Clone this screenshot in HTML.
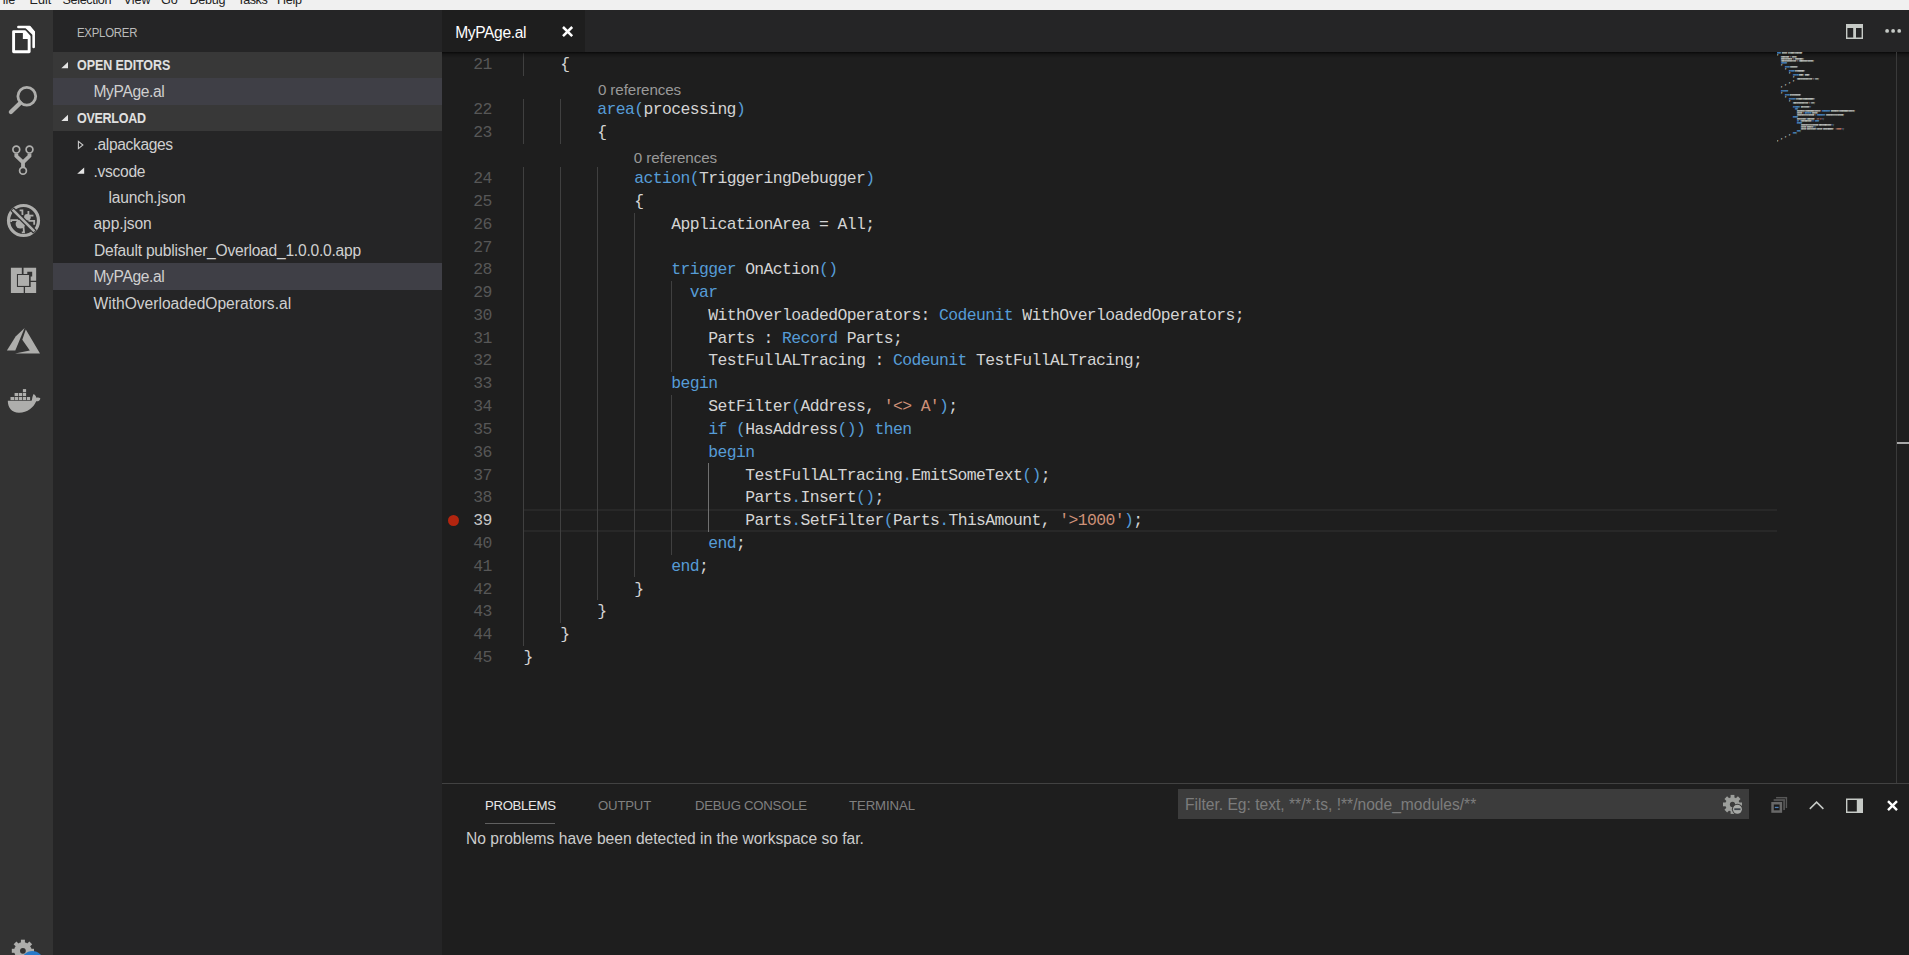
<!DOCTYPE html>
<html><head><meta charset="utf-8"><title>MyPAge.al - Overload - Visual Studio Code</title>
<style>
*{box-sizing:border-box}
html,body{margin:0;padding:0}
body{width:1909px;height:955px;overflow:hidden;background:#1e1e1e;position:relative;font-family:"Liberation Sans",sans-serif;color:#ccc}
.abs{position:absolute}
svg{position:absolute;overflow:visible}
#menubar{left:0;top:0;width:1909px;height:10px;background:#f0f0f0;overflow:hidden}
#menubar span{position:absolute;top:-8.2px;font-size:12.6px;line-height:16px;color:#222;white-space:pre}
#activity{left:0;top:10px;width:53px;height:945px;background:#333333;overflow:hidden}
#sidebar{left:53px;top:10px;width:389px;height:945px;background:#252526}
#tabs{left:442px;top:10px;width:1467px;height:42px;background:#252526}
#tab1{left:0;top:0;width:143px;height:42px;background:#1e1e1e}
.sbtitle{left:24px;top:14px;font-size:13.2px;line-height:18px;color:#bbbbbb;letter-spacing:-.3px;white-space:pre;transform:scaleX(.866);transform-origin:0 0}
.hdr{left:0;width:389px;height:26.4px;background:#383838;font-weight:bold;font-size:14.2px;line-height:26.4px;color:#e0e0e0;white-space:pre}
.hdr span{position:absolute;left:24px;top:0px;letter-spacing:-.1px;transform:scaleX(.881);transform-origin:0 0}
.row{left:0;width:389px;height:26.4px;font-size:15.6px;line-height:26.4px;color:#d0d0d0;white-space:pre}
.row.sel{background:#3f3f46}
.row span{position:absolute;top:.6px}
/* editor */
.cl{position:absolute;left:524px;height:22.8px;line-height:22.8px;font-family:"Liberation Mono",monospace;font-size:16.4px;letter-spacing:-.6px;color:#d4d4d4;white-space:pre}
.num{position:absolute;left:441.2px;width:50.6px;text-align:right;height:22.8px;line-height:22.8px;font-family:"Liberation Mono",monospace;font-size:16.4px;letter-spacing:-.6px;color:#575757;white-space:pre}
.k{color:#569cd6}.s{color:#ce9178}
.lens{position:absolute;height:22.8px;line-height:22.8px;font-size:15.2px;color:#999;white-space:pre;letter-spacing:-.1px}
.g{position:absolute;width:1px;background:#404040}
.ga{position:absolute;width:1px;background:#707070}
/* panel */
#panel{left:442px;top:783px;width:1467px;height:172px;background:#1e1e1e;border-top:1px solid #424242}
.ptab{position:absolute;top:13.1px;font-size:13.2px;line-height:18px;color:#808080;white-space:pre}
#filter{left:736px;top:5px;width:571px;height:30px;background:#3c3c3c}
#filter span{position:absolute;left:7px;top:6.3px;font-size:15.6px;line-height:20px;color:#7c7c7c;white-space:pre}
/* minimap */
#mini{left:1777px;top:52px;width:119px;height:120px;overflow:hidden;z-index:7}
#mini pre{margin:0;position:absolute;left:0;top:-.5px;font-family:"Liberation Mono",monospace;font-weight:bold;font-size:10px;line-height:12px;transform:scale(0.1667);transform-origin:0 0;color:#f0f0f0;text-shadow:0 2.5px 0 currentColor,.8px 0 0 currentColor;opacity:.9}
#mini .k{color:#5fb0f5}#mini .s{color:#f0a080}
</style></head><body>
<div id="menubar" class="abs"><span style="left:-5px">File</span><span style="left:29.5px">Edit</span><span style="left:62.5px;letter-spacing:-.35px">Selection</span><span style="left:123.5px">View</span><span style="left:161px">Go</span><span style="left:189.5px;letter-spacing:-.3px">Debug</span><span style="left:237.5px;letter-spacing:-.5px">Tasks</span><span style="left:277px;letter-spacing:-.3px">Help</span></div>
<div id="activity" class="abs">
<!-- explorer (files) icon, coords are page coords minus (0,10) -->
<svg style="left:0;top:0" width="53" height="945" viewBox="0 10 53 945">
<g fill="none" stroke="#fff" stroke-width="2.6" stroke-linecap="round" stroke-linejoin="round">
<path d="M18.4 27.05 H29.4 L33.65 32 V46.9"/>
</g>
<path d="M25.6 28.3 L29.9 25.8 L34.95 31.8 V34.8 H32.4 Z" fill="#fff"/>
<path d="M13.6 31.6 H24.6 L29.15 36.6 V51.75 H13.6 Z" fill="#333333" stroke="#333333" stroke-width="5.4" stroke-linejoin="round"/>
<path d="M13.6 31.6 H24.6 L29.15 36.6 V51.75 H13.6 Z" fill="none" stroke="#fff" stroke-width="2.9" stroke-linejoin="round"/>
<path d="M22.85 31.6 V38.9 H29.15 V36.6 L24.6 31.6 Z" fill="#fff"/>
<!-- search -->
<g fill="none" stroke="#aeaeac">
<circle cx="26.8" cy="96.2" r="8.9" stroke-width="2.8"/>
<path d="M20.2 103 L10.9 112" stroke-width="4.3" stroke-linecap="round"/>
</g>
<!-- git -->
<g fill="none" stroke="#aeaeac">
<path d="M16.3 153.6 V156 L23 162.4 L29.5 156 V153.6 M23 162 V167" stroke-width="3.8" stroke-linejoin="miter"/>
<circle cx="16.3" cy="149.6" r="3.4" stroke-width="1.7"/>
<circle cx="29.5" cy="149.6" r="3.4" stroke-width="1.7"/>
<circle cx="23" cy="170.8" r="3.4" stroke-width="1.7"/>
</g>
<!-- debug (no bug) -->
<circle cx="23.5" cy="220.5" r="15" stroke="#aeaeac" stroke-width="3.2" fill="none"/>
<g fill="#aeaeac" stroke="none">
<ellipse cx="20.4" cy="224" rx="4.8" ry="4.6"/>
<ellipse cx="27.4" cy="217.2" rx="3.3" ry="3.2"/>
</g>
<g fill="none" stroke="#aeaeac" stroke-width="1.8">
<path d="M11.2 222 V220.2 H18"/>
<path d="M23.4 226 L24 232.4 H21.8"/>
<path d="M19.6 210.4 H22.4 V215"/>
<path d="M28.4 211 V215"/>
<path d="M30 215.6 H33.4"/>
<path d="M28.4 220.8 H34.2 V224.8"/>
</g>
<path d="M12 209 L35 232" stroke="#333333" stroke-width="5.2" fill="none"/>
<path d="M12.6 209.6 L34.4 231.4" stroke="#aeaeac" stroke-width="2.6" fill="none"/>
<!-- extensions -->
<g fill="#aeaeac">
<path d="M10.9 267.84 H21.83 V274.06 H16.93 V286.9 H23.72 V293.1 H10.9 Z"/>
<path d="M23.53 267.84 H36.15 V280.66 H30.69 V276.5 H32.2 V271.8 H27.3 V274.06 H23.53 Z"/>
<path d="M30.69 281.98 H36.15 V293.1 H25.03 V286.9 H30.69 Z"/>
<rect x="17.99" y="275" width="11.08" height="10.9"/>
</g>
<!-- azure -->
<g fill="#aeaeac">
<path d="M24.6 328 L15.6 336.4 L6.9 350.6 H15.3 Z"/>
<path d="M25.8 329.6 L40 353.4 H15 L29.8 350.6 L22.3 339.8 Z"/>
</g>
<!-- docker -->
<g fill="#aeaeac">
<path d="M7.8 400.7 H31.6 C32.4 399.6 32 396.4 33.6 394 C35.2 395 36.2 396.4 36.4 397.8 C37.8 397.2 39.4 397.4 40.4 398.4 C39.9 400.6 38 401.5 36.2 401.2 C33.6 407.4 27.6 412.7 19 412.7 C11.6 412.7 7.8 407.6 7.8 400.7 Z"/>
<rect x="10.5" y="397" width="3.5" height="3.1"/>
<rect x="14.6" y="397" width="3.5" height="3.1"/>
<rect x="18.8" y="397" width="3.4" height="3.1"/>
<rect x="22.9" y="397" width="3.2" height="3.1"/>
<rect x="26.9" y="397" width="3.2" height="3.1"/>
<rect x="14.6" y="393" width="3.5" height="3.1"/>
<rect x="18.8" y="393" width="3.4" height="3.1"/>
<rect x="22.9" y="393" width="3.2" height="3.1"/>
<rect x="22.9" y="389.1" width="3.2" height="3.1"/>
</g>
<!-- gear -->
<g transform="translate(22.9 950.8)" fill="#aeaeac">
<circle r="8.7"/>
<g id="gt"><rect x="-2" y="-11.1" width="4" height="6"/><rect x="-2" y="5.1" width="4" height="6"/><rect x="-11.1" y="-2" width="6" height="4"/><rect x="5.1" y="-2" width="6" height="4"/></g>
<g transform="rotate(45)"><rect x="-2" y="-11.1" width="4" height="6"/><rect x="-2" y="5.1" width="4" height="6"/><rect x="-11.1" y="-2" width="6" height="4"/><rect x="5.1" y="-2" width="6" height="4"/></g>
<circle r="2.9" fill="#333333"/>
</g>
<circle cx="32.4" cy="961.7" r="10.8" fill="#2879c8"/>
</svg>
</div>
<div id="sidebar" class="abs">
<div class="abs sbtitle">EXPLORER</div>
<div class="abs hdr" style="top:42px"><span>OPEN EDITORS</span></div>
<div class="abs row sel" style="top:68.4px"><span style="left:40.5px;letter-spacing:-.38px">MyPAge.al</span></div>
<div class="abs hdr" style="top:94.8px"><span style="letter-spacing:-.3px">OVERLOAD</span></div>
<div class="abs row" style="top:121.2px"><span style="left:40.5px;letter-spacing:-.36px">.alpackages</span></div>
<div class="abs row" style="top:147.6px"><span style="left:40.5px;top:1.4px;letter-spacing:-.3px">.vscode</span></div>
<div class="abs row" style="top:174px"><span style="left:55.5px;letter-spacing:-.18px">launch.json</span></div>
<div class="abs row" style="top:200.4px"><span style="left:40.5px;letter-spacing:-.1px">app.json</span></div>
<div class="abs row" style="top:226.8px"><span style="left:41px;top:1.4px;letter-spacing:-.23px">Default publisher_Overload_1.0.0.0.app</span></div>
<div class="abs row sel" style="top:253.2px"><span style="left:40.5px;letter-spacing:-.38px">MyPAge.al</span></div>
<div class="abs row" style="top:279.6px"><span style="left:40.5px;top:1.4px">WithOverloadedOperators.al</span></div>
<svg style="left:0;top:0" width="389" height="945" viewBox="53 10 389 945">
<g fill="#e4e4e4">
<path d="M61.3 68.2 H68 V62 Z"/>
<path d="M61.3 121 H68 V114.8 Z"/>
<path d="M77.2 173.7 H84.2 V167.6 Z"/>
</g>
<path d="M78.4 141.4 V148.6 L82.9 145 Z" fill="none" stroke="#c8c8c8" stroke-width="1.1"/>
</svg>
</div>
<div id="tabs" class="abs"><div id="tab1" class="abs"><span class="abs" style="left:13.2px;top:12.6px;font-size:15.6px;line-height:20px;color:#fff;letter-spacing:-.38px;white-space:pre">MyPAge.al</span></div>
<svg style="left:0;top:0" width="1467" height="42" viewBox="442 10 1467 42">
<path d="M563 27 L572.2 36.2 M572.2 27 L563 36.2" stroke="#fff" stroke-width="2.5" fill="none"/>
<g fill="#c6cac6">
<path d="M1846 24.1 H1863 V39 H1846 Z M1847.4 28 V37.6 H1853.2 V28 Z M1856 28 V37.6 H1861.6 V28 Z" fill-rule="evenodd"/>
<circle cx="1887.1" cy="30.9" r="1.9"/><circle cx="1893.1" cy="30.9" r="1.9"/><circle cx="1899.2" cy="30.9" r="1.9"/>
</g>
</svg>
</div>
<div class="abs" style="left:442px;top:52px;width:1467px;height:6px;background:linear-gradient(#000000b0,#00000040 40%,#0000);z-index:5"></div>
<div class="abs" style="left:1896px;top:52px;width:1px;height:731px;background:#3a3a3a;z-index:6"></div>
<div class="abs" style="left:1897px;top:442px;width:12px;height:2.4px;background:#a8a8a8;z-index:6"></div>
<div id="editor">
<div class="g" style="left:523px;top:53.0px;height:22.8px"></div>
<div class="num" style="top:54px">21</div>
<div class="cl" style="left:560.36px;top:54px">{</div>
<div class="lens" style="left:597.9px;top:78.8px">0 references</div>
<div class="g" style="left:523px;top:98.6px;height:22.8px"></div>
<div class="g" style="left:560px;top:98.6px;height:22.8px"></div>
<div class="num" style="top:99px">22</div>
<div class="cl" style="left:597.32px;top:99px"><span class="k">area(</span>processing<span class="k">)</span></div>
<div class="g" style="left:523px;top:121.4px;height:22.8px"></div>
<div class="g" style="left:560px;top:121.4px;height:22.8px"></div>
<div class="num" style="top:122px">23</div>
<div class="cl" style="left:597.32px;top:122px">{</div>
<div class="lens" style="left:633.8px;top:147.2px">0 references</div>
<div class="g" style="left:523px;top:167.0px;height:22.8px"></div>
<div class="g" style="left:560px;top:167.0px;height:22.8px"></div>
<div class="g" style="left:597px;top:167.0px;height:22.8px"></div>
<div class="num" style="top:168px">24</div>
<div class="cl" style="left:634.28px;top:168px"><span class="k">action(</span>TriggeringDebugger<span class="k">)</span></div>
<div class="g" style="left:523px;top:189.8px;height:22.8px"></div>
<div class="g" style="left:560px;top:189.8px;height:22.8px"></div>
<div class="g" style="left:597px;top:189.8px;height:22.8px"></div>
<div class="num" style="top:191px">25</div>
<div class="cl" style="left:634.28px;top:191px">{</div>
<div class="g" style="left:523px;top:212.6px;height:22.8px"></div>
<div class="g" style="left:560px;top:212.6px;height:22.8px"></div>
<div class="g" style="left:597px;top:212.6px;height:22.8px"></div>
<div class="g" style="left:634px;top:212.6px;height:22.8px"></div>
<div class="num" style="top:214px">26</div>
<div class="cl" style="left:671.24px;top:214px">ApplicationArea = All;</div>
<div class="g" style="left:523px;top:235.4px;height:22.8px"></div>
<div class="g" style="left:560px;top:235.4px;height:22.8px"></div>
<div class="g" style="left:597px;top:235.4px;height:22.8px"></div>
<div class="g" style="left:634px;top:235.4px;height:22.8px"></div>
<div class="num" style="top:237px">27</div>
<div class="g" style="left:523px;top:258.2px;height:22.8px"></div>
<div class="g" style="left:560px;top:258.2px;height:22.8px"></div>
<div class="g" style="left:597px;top:258.2px;height:22.8px"></div>
<div class="g" style="left:634px;top:258.2px;height:22.8px"></div>
<div class="num" style="top:259px">28</div>
<div class="cl" style="left:671.24px;top:259px"><span class="k">trigger</span> OnAction<span class="k">()</span></div>
<div class="g" style="left:523px;top:281.0px;height:22.8px"></div>
<div class="g" style="left:560px;top:281.0px;height:22.8px"></div>
<div class="g" style="left:597px;top:281.0px;height:22.8px"></div>
<div class="g" style="left:634px;top:281.0px;height:22.8px"></div>
<div class="g" style="left:671px;top:281.0px;height:22.8px"></div>
<div class="num" style="top:282px">29</div>
<div class="cl" style="left:689.72px;top:282px"><span class="k">var</span></div>
<div class="g" style="left:523px;top:303.8px;height:22.8px"></div>
<div class="g" style="left:560px;top:303.8px;height:22.8px"></div>
<div class="g" style="left:597px;top:303.8px;height:22.8px"></div>
<div class="g" style="left:634px;top:303.8px;height:22.8px"></div>
<div class="g" style="left:671px;top:303.8px;height:22.8px"></div>
<div class="num" style="top:305px">30</div>
<div class="cl" style="left:708.20px;top:305px">WithOverloadedOperators: <span class="k">Codeunit</span> WithOverloadedOperators;</div>
<div class="g" style="left:523px;top:326.6px;height:22.8px"></div>
<div class="g" style="left:560px;top:326.6px;height:22.8px"></div>
<div class="g" style="left:597px;top:326.6px;height:22.8px"></div>
<div class="g" style="left:634px;top:326.6px;height:22.8px"></div>
<div class="g" style="left:671px;top:326.6px;height:22.8px"></div>
<div class="num" style="top:328px">31</div>
<div class="cl" style="left:708.20px;top:328px">Parts : <span class="k">Record</span> Parts;</div>
<div class="g" style="left:523px;top:349.4px;height:22.8px"></div>
<div class="g" style="left:560px;top:349.4px;height:22.8px"></div>
<div class="g" style="left:597px;top:349.4px;height:22.8px"></div>
<div class="g" style="left:634px;top:349.4px;height:22.8px"></div>
<div class="g" style="left:671px;top:349.4px;height:22.8px"></div>
<div class="num" style="top:350px">32</div>
<div class="cl" style="left:708.20px;top:350px">TestFullALTracing : <span class="k">Codeunit</span> TestFullALTracing;</div>
<div class="g" style="left:523px;top:372.2px;height:22.8px"></div>
<div class="g" style="left:560px;top:372.2px;height:22.8px"></div>
<div class="g" style="left:597px;top:372.2px;height:22.8px"></div>
<div class="g" style="left:634px;top:372.2px;height:22.8px"></div>
<div class="num" style="top:373px">33</div>
<div class="cl" style="left:671.24px;top:373px"><span class="k">begin</span></div>
<div class="g" style="left:523px;top:395.0px;height:22.8px"></div>
<div class="g" style="left:560px;top:395.0px;height:22.8px"></div>
<div class="g" style="left:597px;top:395.0px;height:22.8px"></div>
<div class="g" style="left:634px;top:395.0px;height:22.8px"></div>
<div class="g" style="left:671px;top:395.0px;height:22.8px"></div>
<div class="num" style="top:396px">34</div>
<div class="cl" style="left:708.20px;top:396px">SetFilter<span class="k">(</span>Address, <span class="s">'&lt;&gt; A'</span><span class="k">)</span>;</div>
<div class="g" style="left:523px;top:417.8px;height:22.8px"></div>
<div class="g" style="left:560px;top:417.8px;height:22.8px"></div>
<div class="g" style="left:597px;top:417.8px;height:22.8px"></div>
<div class="g" style="left:634px;top:417.8px;height:22.8px"></div>
<div class="g" style="left:671px;top:417.8px;height:22.8px"></div>
<div class="num" style="top:419px">35</div>
<div class="cl" style="left:708.20px;top:419px"><span class="k">if</span> <span class="k">(</span>HasAddress<span class="k">())</span> <span class="k">then</span></div>
<div class="g" style="left:523px;top:440.6px;height:22.8px"></div>
<div class="g" style="left:560px;top:440.6px;height:22.8px"></div>
<div class="g" style="left:597px;top:440.6px;height:22.8px"></div>
<div class="g" style="left:634px;top:440.6px;height:22.8px"></div>
<div class="g" style="left:671px;top:440.6px;height:22.8px"></div>
<div class="num" style="top:442px">36</div>
<div class="cl" style="left:708.20px;top:442px"><span class="k">begin</span></div>
<div class="g" style="left:523px;top:463.4px;height:22.8px"></div>
<div class="g" style="left:560px;top:463.4px;height:22.8px"></div>
<div class="g" style="left:597px;top:463.4px;height:22.8px"></div>
<div class="g" style="left:634px;top:463.4px;height:22.8px"></div>
<div class="g" style="left:671px;top:463.4px;height:22.8px"></div>
<div class="ga" style="left:708px;top:463.4px;height:22.8px"></div>
<div class="num" style="top:465px">37</div>
<div class="cl" style="left:745.16px;top:465px">TestFullALTracing<span class="k">.</span>EmitSomeText<span class="k">()</span>;</div>
<div class="g" style="left:523px;top:486.2px;height:22.8px"></div>
<div class="g" style="left:560px;top:486.2px;height:22.8px"></div>
<div class="g" style="left:597px;top:486.2px;height:22.8px"></div>
<div class="g" style="left:634px;top:486.2px;height:22.8px"></div>
<div class="g" style="left:671px;top:486.2px;height:22.8px"></div>
<div class="ga" style="left:708px;top:486.2px;height:22.8px"></div>
<div class="num" style="top:487px">38</div>
<div class="cl" style="left:745.16px;top:487px">Parts<span class="k">.</span>Insert<span class="k">()</span>;</div>
<div class="abs" style="left:524px;top:509px;width:1253px;height:23px;border-top:2px solid #282828;border-bottom:2px solid #282828"></div>
<div class="g" style="left:523px;top:509.0px;height:22.8px"></div>
<div class="g" style="left:560px;top:509.0px;height:22.8px"></div>
<div class="g" style="left:597px;top:509.0px;height:22.8px"></div>
<div class="g" style="left:634px;top:509.0px;height:22.8px"></div>
<div class="g" style="left:671px;top:509.0px;height:22.8px"></div>
<div class="ga" style="left:708px;top:509.0px;height:22.8px"></div>
<div class="num" style="top:510px;color:#c6c6c6">39</div>
<div class="cl" style="left:745.16px;top:510px">Parts<span class="k">.</span>SetFilter<span class="k">(</span>Parts<span class="k">.</span>ThisAmount, <span class="s">'&gt;1000'</span><span class="k">)</span>;</div>
<div class="g" style="left:523px;top:531.8px;height:22.8px"></div>
<div class="g" style="left:560px;top:531.8px;height:22.8px"></div>
<div class="g" style="left:597px;top:531.8px;height:22.8px"></div>
<div class="g" style="left:634px;top:531.8px;height:22.8px"></div>
<div class="g" style="left:671px;top:531.8px;height:22.8px"></div>
<div class="num" style="top:533px">40</div>
<div class="cl" style="left:708.20px;top:533px"><span class="k">end</span>;</div>
<div class="g" style="left:523px;top:554.6px;height:22.8px"></div>
<div class="g" style="left:560px;top:554.6px;height:22.8px"></div>
<div class="g" style="left:597px;top:554.6px;height:22.8px"></div>
<div class="g" style="left:634px;top:554.6px;height:22.8px"></div>
<div class="num" style="top:556px">41</div>
<div class="cl" style="left:671.24px;top:556px"><span class="k">end</span>;</div>
<div class="g" style="left:523px;top:577.4px;height:22.8px"></div>
<div class="g" style="left:560px;top:577.4px;height:22.8px"></div>
<div class="g" style="left:597px;top:577.4px;height:22.8px"></div>
<div class="num" style="top:579px">42</div>
<div class="cl" style="left:634.28px;top:579px">}</div>
<div class="g" style="left:523px;top:600.2px;height:22.8px"></div>
<div class="g" style="left:560px;top:600.2px;height:22.8px"></div>
<div class="num" style="top:601px">43</div>
<div class="cl" style="left:597.32px;top:601px">}</div>
<div class="g" style="left:523px;top:623.0px;height:22.8px"></div>
<div class="num" style="top:624px">44</div>
<div class="cl" style="left:560.36px;top:624px">}</div>
<div class="num" style="top:647px">45</div>
<div class="cl" style="left:523.40px;top:647px">}</div>
<div class="abs" style="left:447.8px;top:514.8px;width:11.4px;height:11.4px;border-radius:50%;background:#b2250f"></div>
</div>
<div id="mini" class="abs"><pre><span class="k">page</span> 50100 TriggeringPage
{
    PageType = Card;
    SourceTable = Customer;
    ApplicationArea = Administration;
    <span class="k">layout</span>
    {
        <span class="k">area(</span>content<span class="k">)</span>
        {
            <span class="k">group(</span>GroupName<span class="k">)</span>
            {
                <span class="k">field(</span>Name; Name<span class="k">)</span>
                {
                    ApplicationArea = All;
                }
            }
        }
    }

    <span class="k">actions</span>
    {
        <span class="k">area(</span>processing<span class="k">)</span>
        {
            <span class="k">action(</span>TriggeringDebugger<span class="k">)</span>
            {
                ApplicationArea = All;

                <span class="k">trigger</span> OnAction<span class="k">()</span>
                  <span class="k">var</span>
                    WithOverloadedOperators: <span class="k">Codeunit</span> WithOverloadedOperators;
                    Parts : <span class="k">Record</span> Parts;
                    TestFullALTracing : <span class="k">Codeunit</span> TestFullALTracing;
                <span class="k">begin</span>
                    SetFilter<span class="k">(</span>Address, <span class="s">'&lt;&gt; A'</span><span class="k">)</span>;
                    <span class="k">if</span> <span class="k">(</span>HasAddress<span class="k">())</span> <span class="k">then</span>
                    <span class="k">begin</span>
                        TestFullALTracing<span class="k">.</span>EmitSomeText<span class="k">()</span>;
                        Parts<span class="k">.</span>Insert<span class="k">()</span>;
                        Parts<span class="k">.</span>SetFilter<span class="k">(</span>Parts<span class="k">.</span>ThisAmount, <span class="s">'&gt;1000'</span><span class="k">)</span>;
                    <span class="k">end</span>;
                <span class="k">end</span>;
            }
        }
    }
}</pre></div>
<div id="panel" class="abs">
<span class="ptab" style="left:43px;color:#e7e7e7;letter-spacing:-.33px">PROBLEMS</span>
<div class="abs" style="left:43px;top:39px;width:70px;height:1px;background:#606060"></div>
<span class="ptab" style="left:156px;letter-spacing:-.2px">OUTPUT</span>
<span class="ptab" style="left:253px;letter-spacing:-.25px">DEBUG CONSOLE</span>
<span class="ptab" style="left:407px;letter-spacing:-.1px">TERMINAL</span>
<span class="abs" style="left:24px;top:45px;font-size:15.6px;line-height:20px;color:#ccc;white-space:pre">No problems have been detected in the workspace so far.</span>
<div id="filter" class="abs"><span>Filter. Eg: text, **/*.ts, !**/node_modules/**</span></div>
<svg style="left:0;top:0" width="1467" height="171" viewBox="442 784 1467 171">
<!-- filter gear -->
<g transform="translate(1732.5 804.4)" fill="#9c9e9b">
<circle r="7.1"/>
<g><rect x="-1.9" y="-9.5" width="3.8" height="19"/><rect x="-9.5" y="-1.9" width="19" height="3.8"/></g>
<g transform="rotate(45)"><rect x="-1.9" y="-9.5" width="3.8" height="19"/><rect x="-9.5" y="-1.9" width="19" height="3.8"/></g>
<circle r="2.6" fill="#3c3c3c"/>
</g>
<circle cx="1737.4" cy="809.2" r="5.5" fill="#3c3c3c"/>
<circle cx="1737.4" cy="809.2" r="4.5" fill="#a8aaa7"/>
<rect x="1734.3" y="808.3" width="6.2" height="1.8" fill="#3e434a"/>
<!-- collapse all (dim) -->
<rect x="1776.1" y="796.9" width="11" height="11.2" fill="#3d3d3d"/>
<path d="M1776.1 797.6 H1786.4 V808.1" fill="none" stroke="#575757" stroke-width="1.4"/>
<rect x="1773" y="798.6" width="12.6" height="12.2" fill="#1e1e1e"/>
<rect x="1773.7" y="799.3" width="11.2" height="10.8" fill="#3d3d3d"/>
<path d="M1773.7 800 H1784.2 V810.1" fill="none" stroke="#575757" stroke-width="1.4"/>
<rect x="1770.5" y="801.2" width="12.4" height="12.4" fill="#1e1e1e"/>
<rect x="1772.55" y="803.25" width="8.3" height="8.3" fill="#191919" stroke="#686868" stroke-width="2.5"/>
<rect x="1774.8" y="806.8" width="3.8" height="1.3" fill="#4f7fb5"/>
<!-- chevron up -->
<path d="M1809.8 808.9 L1816.6 802.1 L1823.4 808.9" fill="none" stroke="#c6cac6" stroke-width="1.5"/>
<!-- panel right -->
<path d="M1846 798.5 H1863 V813 H1846 Z M1847.4 799.9 V811.6 H1856.8 V799.9 Z" fill="#c6cac6" fill-rule="evenodd"/>
<!-- close -->
<path d="M1888 801.2 L1897 810.2 M1897 801.2 L1888 810.2" stroke="#fff" stroke-width="2.4" fill="none"/>
</svg>
</div>
</body></html>
